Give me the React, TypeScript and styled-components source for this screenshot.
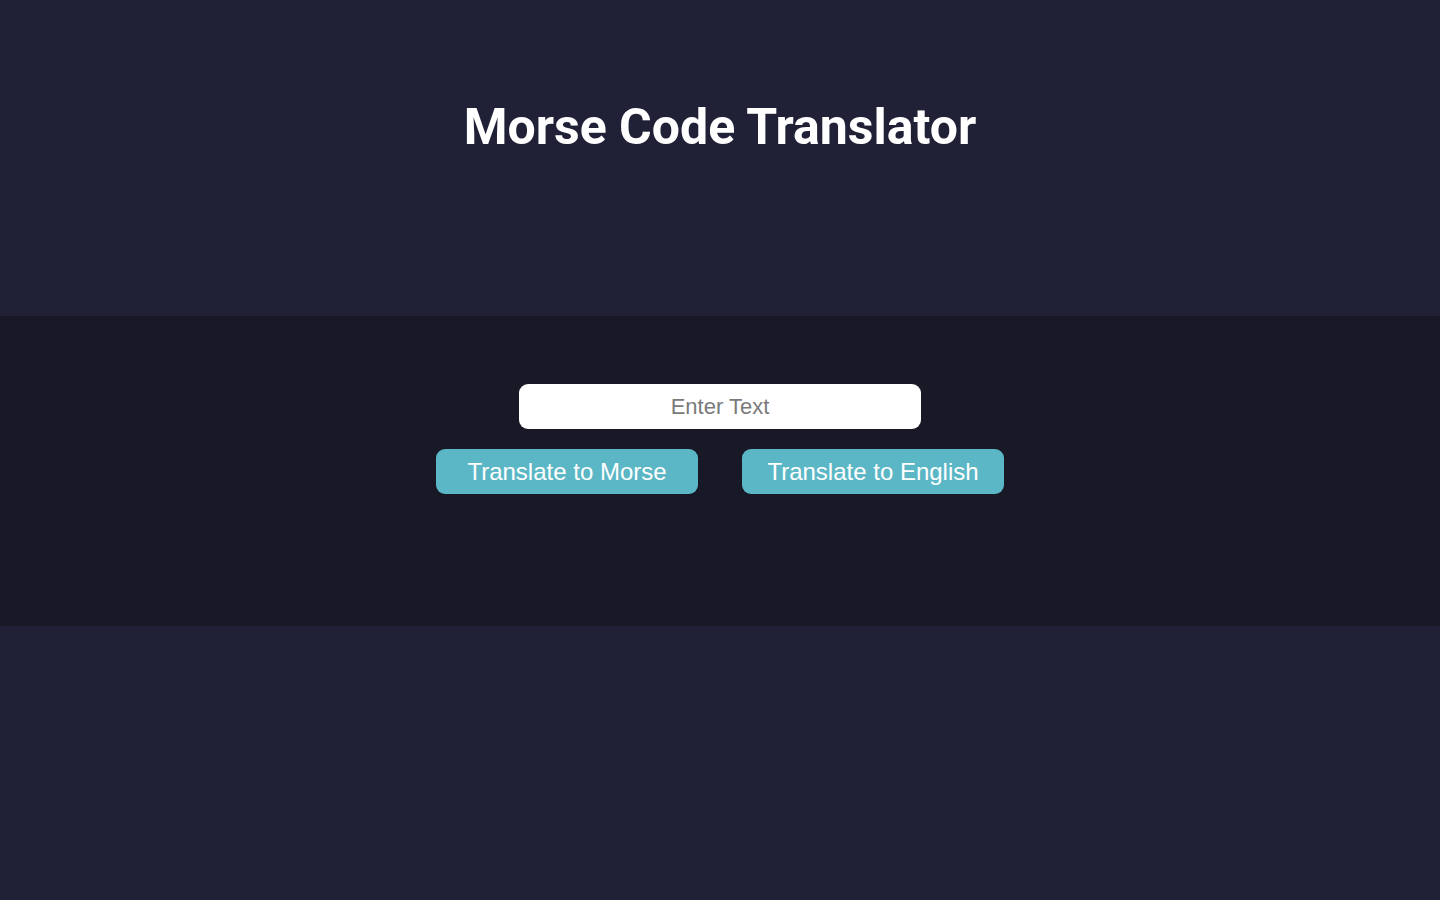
import React from "react";
import styled, { createGlobalStyle } from "styled-components";

const Global = createGlobalStyle`
  html, body { margin: 0; padding: 0; background: #202037; }
  body { min-height: 900px; }
  * { box-sizing: border-box; }
`;

const Page = styled.div`
  min-height: 900px;
  background: #202037;
  display: flex;
  flex-direction: column;
`;

const Header = styled.header`
  height: 316px;
  display: flex;
  justify-content: center;
  padding-top: 98px;
`;

const Title = styled.h1`
  margin: 0;
  font-family: Roboto, "Liberation Sans", sans-serif;
  font-weight: 700;
  font-size: 50px;
  line-height: 59px;
  color: #ffffff;
`;

const Band = styled.section`
  height: 310px;
  background: #181827;
  display: flex;
  flex-direction: column;
  align-items: center;
  padding-top: 68px;
  gap: 20px;
`;

const Input = styled.input`
  width: 402px;
  height: 45px;
  border: none;
  border-radius: 9px;
  background: #ffffff;
  text-align: center;
  font-family: "Liberation Sans", Arial, sans-serif;
  font-size: 22px;
  color: #333;
  outline: none;
  &::placeholder { color: #7a7a7a; }
`;

const Row = styled.div`
  display: flex;
  gap: 44px;
`;

const Button = styled.button`
  width: 262px;
  height: 45px;
  border: none;
  border-radius: 9px;
  background: #5bb7c5;
  color: #ffffff;
  font-family: "Liberation Sans", Arial, sans-serif;
  font-size: 24px;
  cursor: pointer;
  padding: 0;
`;

export default function App() {
  return (
    <Page>
      <Global />
      <Header>
        <Title>Morse Code Translator</Title>
      </Header>
      <Band>
        <Input placeholder="Enter Text" />
        <Row>
          <Button>Translate to Morse</Button>
          <Button>Translate to English</Button>
        </Row>
      </Band>
    </Page>
  );
}
